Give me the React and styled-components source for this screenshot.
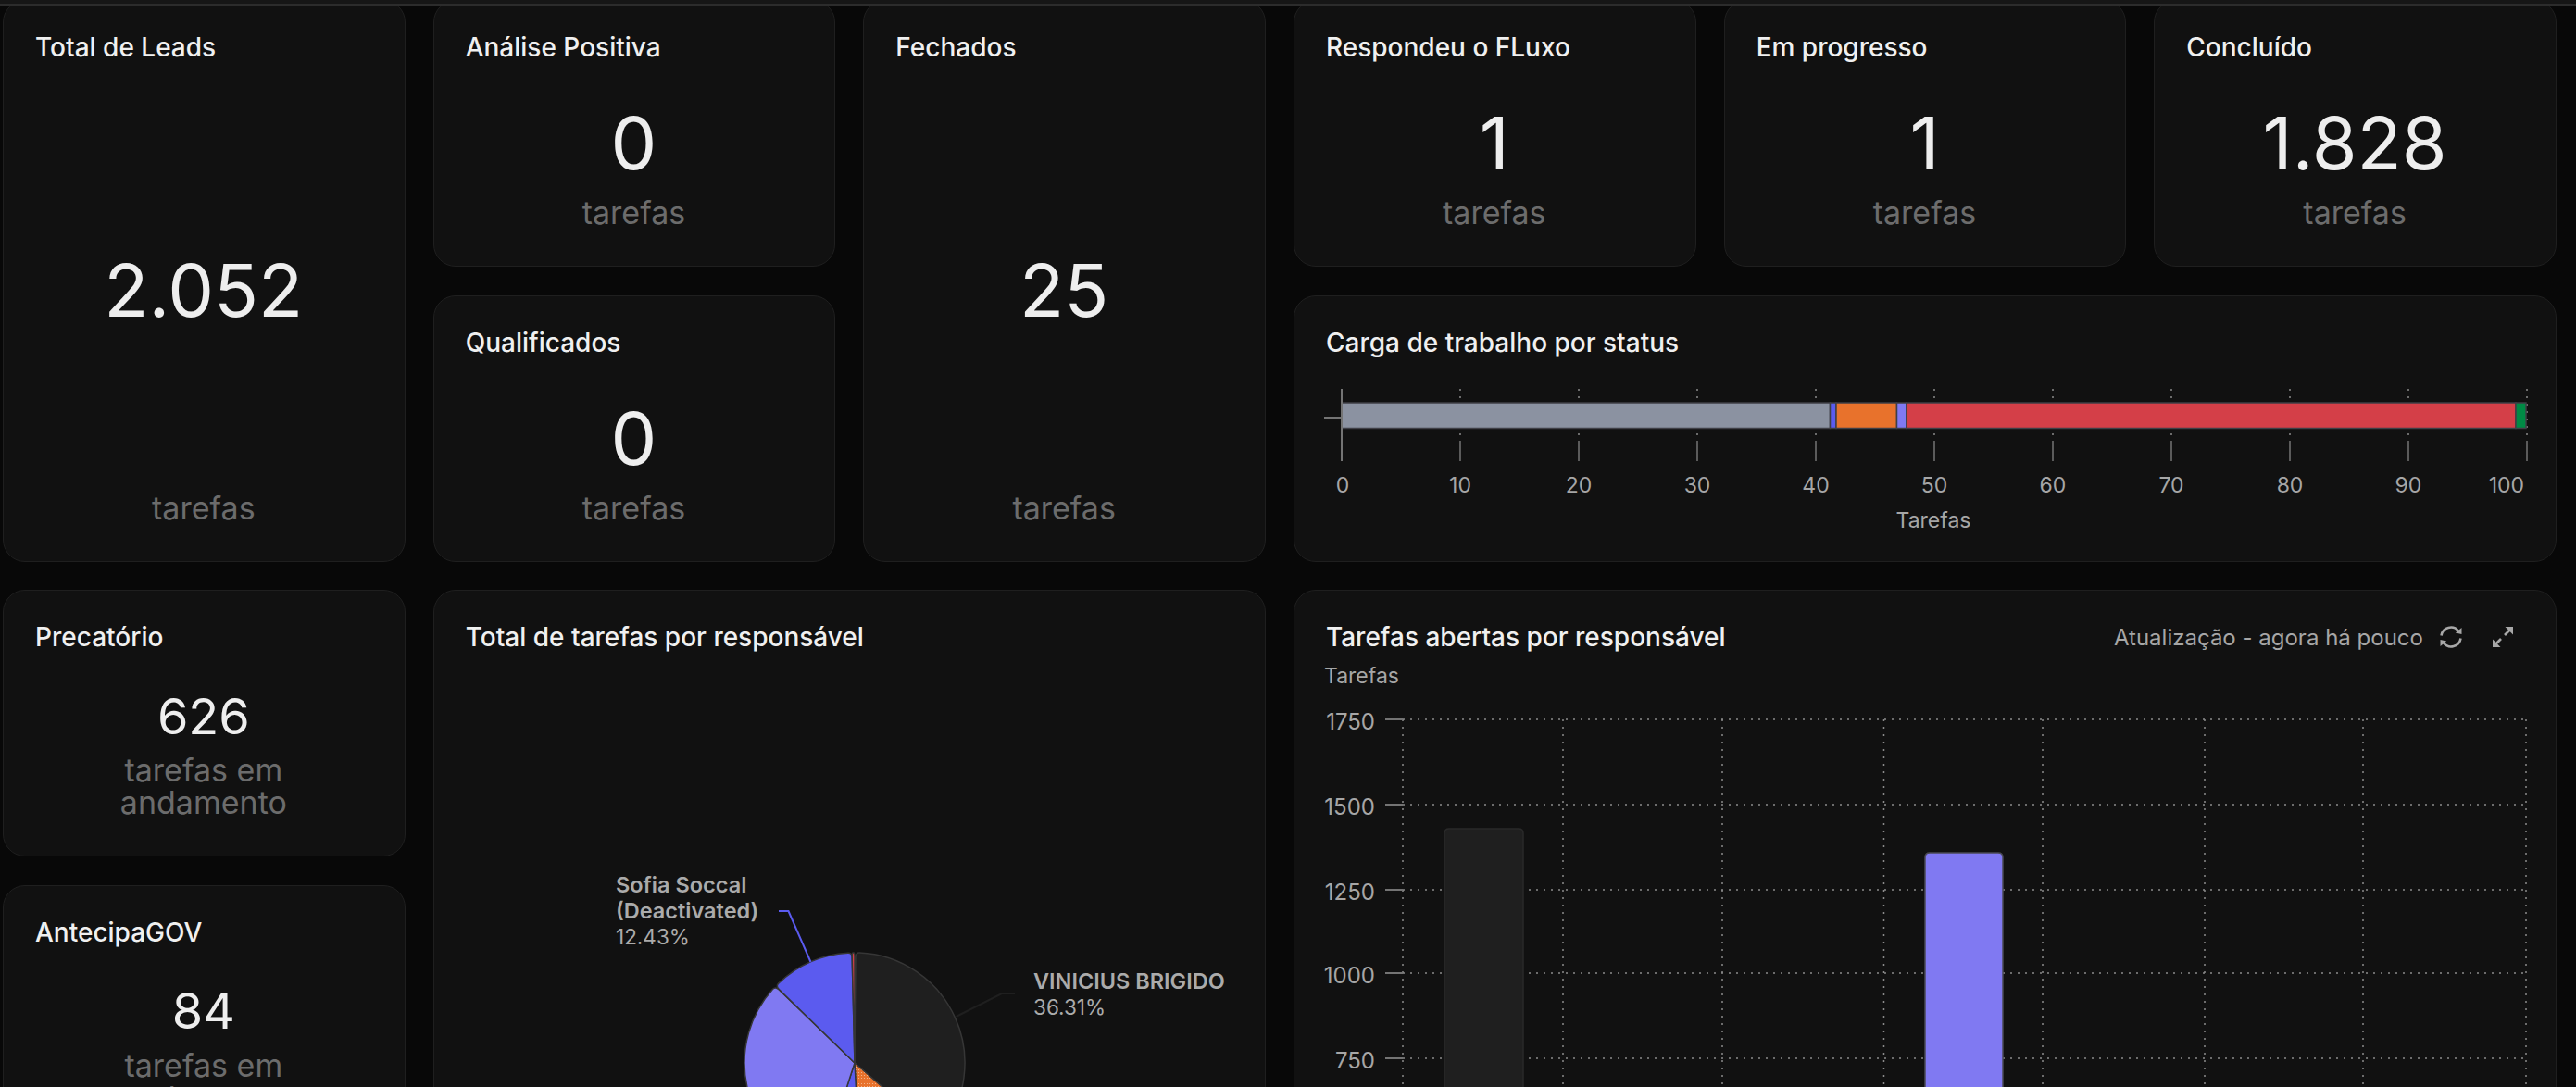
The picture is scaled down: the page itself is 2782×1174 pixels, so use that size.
import React from 'react'
import styled, { createGlobalStyle } from 'styled-components'

const GlobalStyle = createGlobalStyle`
  html, body {
    margin: 0;
    background: #080808;
  }
  #root {
    height: 1174px;
    overflow: hidden;
  }
`

const Page = styled.div`
  position: relative;
  height: 1174px;
  overflow: hidden;
  padding-left: 3px;
  font-family: Inter, "Liberation Sans", sans-serif;
`

const TopEdge = styled.div`
  position: absolute;
  top: 0;
  left: 0;
  right: 0;
  height: 4px;
  background: #161616;
  border-bottom: 2px solid #2c2c2c;
  z-index: 2;
`

const Board = styled.div`
  display: grid;
  grid-template-columns: repeat(6, 434.67px);
  grid-auto-rows: 288px;
  column-gap: 30px;
  row-gap: 30.67px;
`

const Card = styled.section`
  box-sizing: border-box;
  display: flex;
  flex-direction: column;
  grid-column: ${p => p.$col} / span ${p => p.$colSpan || 1};
  grid-row: ${p => p.$row} / span ${p => p.$rowSpan || 1};
  padding: 33px 35px 0 34px;
  background: #111111;
  border: 1px solid #1f1f1f;
  border-radius: 24px;
  min-width: 0;
`

const Title = styled.h3`
  margin: 0;
  font-size: 28px;
  line-height: 34px;
  font-weight: 500;
  color: #f0f0f0;
`

const Value = styled.div`
  flex: 1;
  display: flex;
  align-items: center;
  justify-content: center;
  margin-top: ${p => (p.$compact ? '28px' : '29px')};
  font-size: ${p => (p.$compact ? '54px' : '79px')};
  line-height: 1;
  color: #eeeeee;
`

const Sub = styled.div`
  margin: 0 auto 40px;
  max-width: 240px;
  text-align: center;
  font-size: 34px;
  line-height: 35px;
  color: #6c6c6c;
`

const Head = styled.div`
  display: flex;
  align-items: center;
  justify-content: space-between;
  padding-right: 10px;
`

const Tools = styled.div`
  display: flex;
  align-items: center;
  gap: 30px;
  color: #a8a8a8;
`

const Updated = styled.span`
  margin-right: -14px;
  font-size: 24px;
  color: #a6a6a6;
`

const Chart = styled.svg`
  display: block;
  flex: none;
  margin: 0 -35px 0 -34px;
  font-family: Inter, "Liberation Sans", sans-serif;
`

const RefreshIcon = () => (
  <svg width="28" height="28" viewBox="0 0 28 28" fill="none" stroke="currentColor" strokeWidth="2.6">
    <path d="M3.5 12.5 A10.5 10.5 0 0 1 22 7.5" />
    <path d="M24.5 15.5 A10.5 10.5 0 0 1 6 20.5" />
    <polygon points="25.5,4 25.5,11 18.8,9.6" fill="currentColor" stroke="none" />
    <polygon points="2.5,24 2.5,17 9.2,18.4" fill="currentColor" stroke="none" />
  </svg>
)

const ExpandIcon = () => (
  <svg width="24" height="24" viewBox="0 0 24 24" fill="none" stroke="currentColor" strokeWidth="2.6">
    <path d="M14 10 L20 4" />
    <path d="M10 14 L4 20" />
    <polygon points="23,1 23,9.5 14.5,1" fill="currentColor" stroke="none" />
    <polygon points="1,23 1,14.5 9.5,23" fill="currentColor" stroke="none" />
  </svg>
)

const TICK = '#747474'
const LABEL = '#a6a6a6'

// carga de trabalho: stacked bar, drawn in page coordinates through the viewBox
const segments = [
  { from: 1449, to: 1976.5, fill: '#8b92a1' },
  { from: 1976.5, to: 1983, fill: '#5b5bef' },
  { from: 1983, to: 2048.5, fill: '#e8722c' },
  { from: 2048.5, to: 2059, fill: '#8079f2' },
  { from: 2059, to: 2717, fill: '#d43f48' },
  { from: 2717, to: 2728, fill: '#008a45' },
]
const barTicks = [0, 10, 20, 30, 40, 50, 60, 70, 80, 90, 100]
const barX = v => 1449 + v * 12.8

const StatusBar = () => (
  <Chart width="1362" height="202" viewBox="1398 387 1362 202">
    {barTicks.map(v => (
      <g key={v}>
        {v > 0 && <line x1={barX(v)} x2={barX(v)} y1="420" y2="476" stroke="#8a8a8a" strokeWidth="1.5" strokeDasharray="2 6" />}
        <line x1={barX(v)} x2={barX(v)} y1="476" y2="498" stroke={TICK} strokeWidth="1.5" />
        <text
          x={v === 100 ? 2726 : v === 0 ? 1450 : barX(v)}
          y="532"
          fontSize="23"
          fill={LABEL}
          textAnchor={v === 100 ? 'end' : 'middle'}
        >
          {v}
        </text>
      </g>
    ))}
    {segments.map(s => (
      <rect key={s.from} x={s.from} y="435" width={s.to - s.from} height="27.5" fill={s.fill} stroke="#3f3f46" strokeWidth="1.5" />
    ))}
    <line x1="1449" x2="1449" y1="420" y2="498" stroke={TICK} strokeWidth="2" />
    <line x1="1430" x2="1449" y1="451" y2="451" stroke={TICK} strokeWidth="2" />
    <text x="2088" y="570" fontSize="23" fill={LABEL} textAnchor="middle">Tarefas</text>
  </Chart>
)

// pie slice with softened outer corners, angles in degrees from 12 o'clock
const CX = 923
const CY = 1148
const R = 119
const polar = (r, deg) => {
  const a = (deg - 90) * Math.PI / 180
  return `${(CX + r * Math.cos(a)).toFixed(2)} ${(CY + r * Math.sin(a)).toFixed(2)}`
}
const slicePath = (a0, a1) => {
  const soft = Math.min(2, (a1 - a0) / 3)
  return [
    `M${CX} ${CY}`,
    `L${polar(R - 5, a0)}`,
    `Q${polar(R, a0)} ${polar(R, a0 + soft)}`,
    `A${R} ${R} 0 ${a1 - a0 > 180 ? 1 : 0} 1 ${polar(R, a1 - soft)}`,
    `Q${polar(R, a1)} ${polar(R - 5, a1)}`,
    'Z',
  ].join(' ')
}
const slices = [
  { a0: 0.5, a1: 131, fill: '#1f1f1f' },
  { a0: 131, a1: 177, fill: 'url(#dots)' },
  { a0: 177, a1: 198, fill: '#5b5bef' },
  { a0: 198, a1: 314, fill: '#8079f2' },
  { a0: 314.2, a1: 358.6, fill: '#5b5bef' },
  { a0: 358.6, a1: 360, fill: '#d43f48' },
]

const PieLabel = styled.text`
  font-size: ${p => (p.$strong ? '23.5px' : '22.5px')};
  fill: #ababab;
  font-weight: ${p => (p.$strong ? 600 : 400)};
`

const OwnerPie = () => (
  <Chart width="897" height="540" viewBox="469 705 897 540">
    <defs>
      <pattern id="dots" width="3" height="3" patternUnits="userSpaceOnUse">
        <rect width="3" height="3" fill="#e8722c" />
        <rect width="1" height="1" fill="#f2b48c" />
      </pattern>
    </defs>
    {slices.map(s => (
      <path key={s.a0} d={slicePath(s.a0, s.a1)} fill={s.fill} stroke="#363636" strokeWidth="1.5" strokeLinejoin="round" />
    ))}
    <polyline points="875.5,1039 851.5,984 841,984" fill="none" stroke="#5b5bef" strokeWidth="2" />
    <polyline points="1032.5,1098 1082,1073 1096,1073" fill="none" stroke="#1f1f1f" strokeWidth="2" />
    <PieLabel x="665" y="964" $strong>Sofia Soccal</PieLabel>
    <PieLabel x="665" y="992" $strong>(Deactivated)</PieLabel>
    <PieLabel x="665" y="1020">12.43%</PieLabel>
    <PieLabel x="1116" y="1068" $strong>VINICIUS BRIGIDO</PieLabel>
    <PieLabel x="1116" y="1096">36.31%</PieLabel>
  </Chart>
)

// tarefas abertas: column chart
const yTicks = [
  { label: 1750, y: 777 },
  { label: 1500, y: 869 },
  { label: 1250, y: 961 },
  { label: 1000, y: 1051 },
  { label: 750, y: 1143 },
]
const xGrid = [1515, 1688, 1860, 2034.5, 2206, 2381, 2552, 2728]
const columns = [
  { x: 1560, width: 85, top: 895, fill: '#1f1f1f', stroke: '#2a2a2a' },
  { x: 2079, width: 84, top: 921, fill: '#8079f2', stroke: '#4a4a55' },
]
const columnPath = c =>
  `M${c.x} 1260 V${c.top + 5} Q${c.x} ${c.top} ${c.x + 5} ${c.top} H${c.x + c.width - 5} Q${c.x + c.width} ${c.top} ${c.x + c.width} ${c.top + 5} V1260 Z`

const OpenTasksChart = () => (
  <Chart width="1362" height="540" viewBox="1398 705 1362 540">
    <text x="1430" y="738" fontSize="23" fill={LABEL}>Tarefas</text>
    {xGrid.map(x => (
      <line key={x} x1={x} x2={x} y1="777" y2="1245" stroke="#8a8a8a" strokeWidth="1.5" strokeDasharray="2 6" />
    ))}
    {yTicks.map(t => (
      <g key={t.label}>
        <line x1="1515" x2="2728" y1={t.y} y2={t.y} stroke="#8a8a8a" strokeWidth="1.5" strokeDasharray="2 6" />
        <line x1="1496" x2="1515" y1={t.y} y2={t.y} stroke={TICK} strokeWidth="2" />
        <text x="1485" y={t.y + 11} fontSize="24" fill={LABEL} textAnchor="end">{t.label}</text>
      </g>
    ))}
    {columns.map(c => (
      <path key={c.x} d={columnPath(c)} fill={c.fill} stroke={c.stroke} strokeWidth="1.5" />
    ))}
  </Chart>
)

const Stat = ({ title, value, sub = 'tarefas', compact, ...place }) => (
  <Card {...place}>
    <Title>{title}</Title>
    <Value $compact={compact}>{value}</Value>
    <Sub>{sub}</Sub>
  </Card>
)

const App = () => (
  <Page>
    <GlobalStyle />
    <TopEdge />
    <Board>
      <Stat title="Total de Leads" value="2.052" $col={1} $row={1} $rowSpan={2} />
      <Stat title="Análise Positiva" value="0" $col={2} $row={1} />
      <Stat title="Qualificados" value="0" $col={2} $row={2} />
      <Stat title="Fechados" value="25" $col={3} $row={1} $rowSpan={2} />
      <Stat title="Respondeu o FLuxo" value="1" $col={4} $row={1} />
      <Stat title="Em progresso" value="1" $col={5} $row={1} />
      <Stat title="Concluído" value="1.828" $col={6} $row={1} />

      <Card $col={4} $colSpan={3} $row={2}>
        <Title>Carga de trabalho por status</Title>
        <StatusBar />
      </Card>

      <Stat title="Precatório" value="626" sub="tarefas em andamento" compact $col={1} $row={3} />
      <Stat title="AntecipaGOV" value="84" sub="tarefas em andamento" compact $col={1} $row={4} />

      <Card $col={2} $colSpan={2} $row={3} $rowSpan={2}>
        <Title>Total de tarefas por responsável</Title>
        <OwnerPie />
      </Card>

      <Card $col={4} $colSpan={3} $row={3} $rowSpan={2}>
        <Head>
          <Title>Tarefas abertas por responsável</Title>
          <Tools>
            <Updated>Atualização - agora há pouco</Updated>
            <RefreshIcon />
            <ExpandIcon />
          </Tools>
        </Head>
        <OpenTasksChart />
      </Card>
    </Board>
  </Page>
)

export default App
